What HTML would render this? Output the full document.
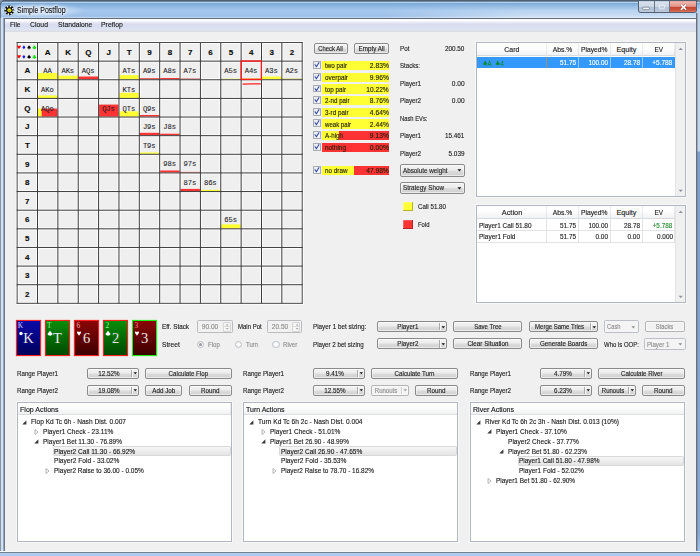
<!DOCTYPE html>
<html><head><meta charset="utf-8"><title>Simple Postflop</title>
<style>
html,body{margin:0;padding:0}
body{width:700px;height:556px;overflow:hidden;position:relative;background:#f0f0f0;font-family:"Liberation Sans",sans-serif;font-size:7px}
body>div,body>svg,body>span,#capbtns>div{position:absolute;box-sizing:border-box}
.t{position:absolute;white-space:nowrap;margin:0;padding:0;-webkit-text-stroke:0.13px currentColor}
svg{display:block;overflow:visible}
#title{left:0;top:0;width:700px;height:19px;background:linear-gradient(#4a5c6e 0px,#55667a 1.3px,#b6d6f6 2px,#b2d2f2 2.6px,#7aa6d4 3.1px,#84b0dc 4.5px,#a5c8ee 10.5px,#9dc0e8 16.4px,#bad4f0 17.1px,#c0d8f2 17.7px,#606c7a 18.1px,#606c7a 19px)}
#tglass{left:380px;top:2.6px;width:320px;height:15.2px;background:linear-gradient(rgba(255,255,255,0) 0,rgba(255,255,255,.15) 40%,rgba(255,255,255,.55) 100%);-webkit-mask-image:linear-gradient(90deg,transparent 0,#000 45%);mask-image:linear-gradient(90deg,transparent 0,#000 45%)}
#tglow{left:-14px;top:2.6px;width:100px;height:15.2px;background:radial-gradient(closest-side,rgba(255,255,255,.5) 0,rgba(255,255,255,.4) 50%,rgba(255,255,255,0) 100%)}
#tl{left:0;top:1.5px;width:1px;height:17px;background:#68727e}
#menubar{left:5px;top:19px;width:691px;height:13px;background:linear-gradient(#fafafa 0px,#ffffff 1px,#f8f9fc 2px,#eceef8 3px,#dde1f1 4.5px,#d8ddef 5.5px,#dadff0 8px,#dfe4f3 10.5px,#dcdfec 11.5px,#d6d8e0 12.3px,#eeeeee 13px)}
#lframe{left:0;top:18.4px;width:5.2px;height:535px;background:linear-gradient(90deg,#868e96 0px,#8c96a0 .6px,#c4daf2 1.1px,#daeafc 2.2px,#c0d6ee 3.0px,#8a9cb4 3.6px,#6a7686 4.1px,#6e7a8a 4.7px,#f8f8f8 5.1px)}
#rframe{left:695.6px;top:13px;width:4.4px;height:541px;background:linear-gradient(90deg,rgba(104,112,128,.0) 0,rgba(104,112,128,1) .5px,rgba(104,112,128,1) 1.2px,rgba(104,112,128,0) 1.7px),linear-gradient(#bcd0e8 0px,#c0d4ea 138px,#7f9fc8 139px,#86a6cf 380px,#88a8d0 520px,#9fbfe6 536px)}
#bframe{left:0;top:551.4px;width:700px;height:4.6px;background:linear-gradient(#fcfcfc 0,#f6f6f6 .6px,#8a94a2 1.0px,#747e8c 1.5px,#7c8896 2.0px,#aecef2 2.4px,#a8c8ee 4.6px)}
#capbtns{left:637.5px;top:1px;width:59px;height:11.6px;border-radius:0 0 3px 3px;overflow:hidden;border:0.8px solid #56606e;border-top:none;background:#9db8d6}
.cb{top:0;height:12px;border-right:0.8px solid #6c7684;background:linear-gradient(#b4c4d8 0,#d6e0ee 10%,#ccd8e8 45%,#b0c1d6 52%,#bccadc 100%)}
.cx{border-right:none;background:linear-gradient(#d8a098 0,#f2b4ac 10%,#e09488 45%,#c84832 52%,#cc543e 75%,#e08876 100%)}
</style></head>
<body>
<div id="title"></div><div id="tglow"></div><div id="tglass"></div><div id="tl"></div><div id="menubar"></div><div id="lframe"></div><div id="rframe"></div><div id="bframe"></div>
<svg style="left:0;top:0" width="700" height="5"><path d="M0 0 H3.4 Q0.6 0.9 0 4 Z" fill="#8096ae"/><path d="M0.4 4.2 Q0.9 1.6 3.6 1.1" stroke="#4a5866" stroke-width=".8" fill="none"/><path d="M700 0 H697.2 Q699.4 0.9 700 3.6 Z" fill="#7c8894"/></svg>
<svg style="left:4px;top:4.5px" width="11" height="11" viewBox="0 0 11 11">
<circle cx="5.3" cy="5.3" r="4.9" fill="#0a0a0a"/>
<circle cx="5.3" cy="5.3" r="3.95" fill="none" stroke="#ffffff" stroke-width="1.7" stroke-dasharray="1.45 1.652" stroke-dashoffset="-.1"/>
<circle cx="5.3" cy="5.3" r="2.9" fill="#0a0a0a"/>
<circle cx="5.4" cy="5.2" r="2.05" fill="#e4de1c"/>
<path d="M4.5 5.5 q.9 .9 1.8 0" stroke="#3a3600" stroke-width=".45" fill="none"/>
</svg>
<div id="capbtns"><div class="cb" style="left:0;width:16px"></div><div class="cb" style="left:16px;width:15.5px"></div><div class="cb cx" style="left:31.5px;width:27.5px"></div></div>
<svg style="left:637px;top:1px" width="60" height="12">
<rect x="5.7" y="6.2" width="6.7" height="2.2" rx=".8" fill="#fff" stroke="#59606c" stroke-width=".6"/>
<rect x="22.3" y="4.2" width="5.4" height="3.6" rx=".7" fill="#c4d0e0" stroke="#f2f5fa" stroke-width=".9" opacity=".85"/>
<path d="M44.4 4.1 l4.2 4.2 m0 -4.2 l-4.2 4.2" stroke="#54302c" stroke-width="2.7" stroke-linecap="round" opacity=".5"/>
<path d="M44.4 4.1 l4.2 4.2 m0 -4.2 l-4.2 4.2" stroke="#fff" stroke-width="1.55" stroke-linecap="square"/>
</svg>
<svg style="left:0;top:0" width="700" height="556" viewBox="0 0 700 556">
<rect x="17.15" y="42.5" width="285.05" height="260.85" fill="#efefef"/>
<rect x="15.65" y="41.00" width="3" height="263.85" fill="#fcfcfc"/>
<rect x="36.01" y="41.00" width="3" height="263.85" fill="#fcfcfc"/>
<rect x="56.37" y="41.00" width="3" height="263.85" fill="#fcfcfc"/>
<rect x="76.73" y="41.00" width="3" height="263.85" fill="#fcfcfc"/>
<rect x="97.09" y="41.00" width="3" height="263.85" fill="#fcfcfc"/>
<rect x="117.45" y="41.00" width="3" height="263.85" fill="#fcfcfc"/>
<rect x="137.81" y="41.00" width="3" height="263.85" fill="#fcfcfc"/>
<rect x="158.18" y="41.00" width="3" height="263.85" fill="#fcfcfc"/>
<rect x="178.54" y="41.00" width="3" height="263.85" fill="#fcfcfc"/>
<rect x="198.90" y="41.00" width="3" height="263.85" fill="#fcfcfc"/>
<rect x="219.26" y="41.00" width="3" height="263.85" fill="#fcfcfc"/>
<rect x="239.62" y="41.00" width="3" height="263.85" fill="#fcfcfc"/>
<rect x="259.98" y="41.00" width="3" height="263.85" fill="#fcfcfc"/>
<rect x="280.34" y="41.00" width="3" height="263.85" fill="#fcfcfc"/>
<rect x="300.70" y="41.00" width="3" height="263.85" fill="#fcfcfc"/>
<rect x="15.65" y="41.00" width="288.05" height="3" fill="#fcfcfc"/>
<rect x="15.65" y="59.63" width="288.05" height="3" fill="#fcfcfc"/>
<rect x="15.65" y="78.26" width="288.05" height="3" fill="#fcfcfc"/>
<rect x="15.65" y="96.90" width="288.05" height="3" fill="#fcfcfc"/>
<rect x="15.65" y="115.53" width="288.05" height="3" fill="#fcfcfc"/>
<rect x="15.65" y="134.16" width="288.05" height="3" fill="#fcfcfc"/>
<rect x="15.65" y="152.79" width="288.05" height="3" fill="#fcfcfc"/>
<rect x="15.65" y="171.43" width="288.05" height="3" fill="#fcfcfc"/>
<rect x="15.65" y="190.06" width="288.05" height="3" fill="#fcfcfc"/>
<rect x="15.65" y="208.69" width="288.05" height="3" fill="#fcfcfc"/>
<rect x="15.65" y="227.32" width="288.05" height="3" fill="#fcfcfc"/>
<rect x="15.65" y="245.95" width="288.05" height="3" fill="#fcfcfc"/>
<rect x="15.65" y="264.59" width="288.05" height="3" fill="#fcfcfc"/>
<rect x="15.65" y="283.22" width="288.05" height="3" fill="#fcfcfc"/>
<rect x="15.65" y="301.85" width="288.05" height="3" fill="#fcfcfc"/>
<rect x="38.01" y="73.01" width="19.36" height="6.30" fill="#ffff33"/>
<rect x="58.37" y="75.71" width="19.36" height="3.60" fill="#ffff33"/>
<rect x="78.73" y="76.51" width="19.36" height="2.80" fill="#ff3333"/>
<rect x="119.45" y="75.11" width="19.36" height="4.20" fill="#ffff33"/>
<rect x="139.81" y="78.31" width="19.36" height="1.00" fill="#ee1c1c"/>
<rect x="160.18" y="78.01" width="19.36" height="1.30" fill="#ff3333"/>
<rect x="180.54" y="78.61" width="19.36" height="0.70" fill="#c02020"/>
<rect x="221.26" y="78.71" width="19.36" height="0.60" fill="#d8d83a"/>
<rect x="241.62" y="78.51" width="19.36" height="0.80" fill="#e6e630"/>
<rect x="261.98" y="76.51" width="19.36" height="2.80" fill="#ffff33"/>
<rect x="282.34" y="78.61" width="19.36" height="0.70" fill="#b8b830"/>
<rect x="38.01" y="95.45" width="19.36" height="2.50" fill="#ffff33"/>
<rect x="119.45" y="92.85" width="19.36" height="5.10" fill="#ffff33"/>
<rect x="38.01" y="108.58" width="3.87" height="8.00" fill="#ffff33"/>
<rect x="41.69" y="108.58" width="15.68" height="8.00" fill="#ff3333"/>
<rect x="99.09" y="104.58" width="19.36" height="12.00" fill="#ff3333"/>
<rect x="119.45" y="111.38" width="19.36" height="5.20" fill="#ffff33"/>
<rect x="139.81" y="114.98" width="19.36" height="1.60" fill="#ff3333"/>
<rect x="139.81" y="132.81" width="19.36" height="2.40" fill="#ff3333"/>
<rect x="160.18" y="133.71" width="19.36" height="1.50" fill="#ff3333"/>
<rect x="139.81" y="152.44" width="19.36" height="1.40" fill="#ffff33"/>
<rect x="160.18" y="170.48" width="19.36" height="2.00" fill="#ff3333"/>
<rect x="180.54" y="171.88" width="19.36" height="0.60" fill="#d83030"/>
<rect x="180.54" y="188.91" width="19.36" height="2.20" fill="#ff3333"/>
<rect x="200.90" y="189.81" width="19.36" height="1.30" fill="#ffff33"/>
<rect x="221.26" y="224.37" width="19.36" height="4.00" fill="#ffff33"/>
<rect x="16.65" y="42.00" width="1.0" height="261.85" fill="#4a4a4a"/>
<rect x="37.01" y="42.00" width="1.0" height="261.85" fill="#3a3a3a"/>
<rect x="57.37" y="42.00" width="1.0" height="261.85" fill="#3a3a3a"/>
<rect x="77.73" y="42.00" width="1.0" height="261.85" fill="#3a3a3a"/>
<rect x="98.09" y="42.00" width="1.0" height="261.85" fill="#3a3a3a"/>
<rect x="118.45" y="42.00" width="1.0" height="261.85" fill="#3a3a3a"/>
<rect x="138.81" y="42.00" width="1.0" height="261.85" fill="#3a3a3a"/>
<rect x="159.18" y="42.00" width="1.0" height="261.85" fill="#3a3a3a"/>
<rect x="179.54" y="42.00" width="1.0" height="261.85" fill="#3a3a3a"/>
<rect x="199.90" y="42.00" width="1.0" height="261.85" fill="#3a3a3a"/>
<rect x="220.26" y="42.00" width="1.0" height="261.85" fill="#3a3a3a"/>
<rect x="240.62" y="42.00" width="1.0" height="261.85" fill="#3a3a3a"/>
<rect x="260.98" y="42.00" width="1.0" height="261.85" fill="#3a3a3a"/>
<rect x="281.34" y="42.00" width="1.0" height="261.85" fill="#3a3a3a"/>
<rect x="301.65" y="42.00" width="1.1" height="261.85" fill="#555555"/>
<rect x="16.65" y="42.00" width="286.05" height="1.0" fill="#4a4a4a"/>
<rect x="16.65" y="60.63" width="286.05" height="1.0" fill="#3a3a3a"/>
<rect x="16.65" y="79.26" width="286.05" height="1.0" fill="#3a3a3a"/>
<rect x="16.65" y="97.90" width="286.05" height="1.0" fill="#3a3a3a"/>
<rect x="16.65" y="116.53" width="286.05" height="1.0" fill="#3a3a3a"/>
<rect x="16.65" y="135.16" width="286.05" height="1.0" fill="#3a3a3a"/>
<rect x="16.65" y="153.79" width="286.05" height="1.0" fill="#3a3a3a"/>
<rect x="16.65" y="172.43" width="286.05" height="1.0" fill="#3a3a3a"/>
<rect x="16.65" y="191.06" width="286.05" height="1.0" fill="#3a3a3a"/>
<rect x="16.65" y="209.69" width="286.05" height="1.0" fill="#3a3a3a"/>
<rect x="16.65" y="228.32" width="286.05" height="1.0" fill="#3a3a3a"/>
<rect x="16.65" y="246.95" width="286.05" height="1.0" fill="#3a3a3a"/>
<rect x="16.65" y="265.59" width="286.05" height="1.0" fill="#3a3a3a"/>
<rect x="16.65" y="284.22" width="286.05" height="1.0" fill="#3a3a3a"/>
<rect x="16.65" y="302.80" width="286.05" height="1.1" fill="#555555"/>
<rect x="241.22" y="61.03" width="20.16" height="18.33" fill="none" stroke="#ff1c1c" stroke-width="1.4"/>
<path d="M242.6 84.1 C248 83.8 255 84.0 260.8 83.8" stroke="#ff2020" stroke-width="1.3" fill="none"/>
<path d="M613.2 78.0 C630 78.3 650 78.2 661.5 77.9 C665 77.6 668 76.6 670.6 75.5" stroke="#f01c24" stroke-width="1.1" fill="none"/>
<path transform="translate(19.00 47.30) scale(.88)" fill="#ff0000" d="M0 2 L-2 -0.6 C-2.3 -2.2 -0.4 -2.4 0 -1.1 C0.4 -2.4 2.3 -2.2 2 -0.6 Z"/>
<path transform="translate(23.90 47.30) scale(.88)" fill="#1010ff" d="M0 -2.1 L1.7 0 L0 2.1 L-1.7 0 Z"/>
<path transform="translate(29.10 47.30) scale(.88)" fill="#000" d="M0 -2.2 C0.6 -1 2 -0.3 1.9 0.7 C1.8 1.7 0.6 1.7 0.25 1 L0.7 2.1 H-0.7 L-0.25 1 C-0.6 1.7 -1.8 1.7 -1.9 0.7 C-2 -0.3 -0.6 -1 0 -2.2 Z"/>
<g transform="translate(34.40 47.30) scale(.9)" fill="#10e010"><circle cx="0" cy="-1.05" r="1.05"/><circle cx="-1.05" cy="0.45" r="1.05"/><circle cx="1.05" cy="0.45" r="1.05"/><path d="M-0.3 0 L-0.7 2.1 H0.7 L0.3 0 Z"/></g>
<path transform="translate(19.00 56.80) scale(.88)" fill="#ff0000" d="M0 2 L-2 -0.6 C-2.3 -2.2 -0.4 -2.4 0 -1.1 C0.4 -2.4 2.3 -2.2 2 -0.6 Z"/>
<path transform="translate(23.90 56.80) scale(.88)" fill="#1010ff" d="M0 -2.1 L1.7 0 L0 2.1 L-1.7 0 Z"/>
<path transform="translate(29.10 56.80) scale(.88)" fill="#000" d="M0 -2.2 C0.6 -1 2 -0.3 1.9 0.7 C1.8 1.7 0.6 1.7 0.25 1 L0.7 2.1 H-0.7 L-0.25 1 C-0.6 1.7 -1.8 1.7 -1.9 0.7 C-2 -0.3 -0.6 -1 0 -2.2 Z"/>
<g transform="translate(34.40 56.80) scale(.9)" fill="#10e010"><circle cx="0" cy="-1.05" r="1.05"/><circle cx="-1.05" cy="0.45" r="1.05"/><circle cx="1.05" cy="0.45" r="1.05"/><path d="M-0.3 0 L-0.7 2.1 H0.7 L0.3 0 Z"/></g>
</svg>
<div style="left:313.50px;top:43.00px;width:34.50px;height:11.10px;border:1px solid #8a8a8a;border-radius:2px;background:linear-gradient(#f3f3f3 0%,#ececec 48%,#dcdcdc 52%,#d0d0d0 100%);box-shadow:inset 0 0 0 0.7px rgba(255,255,255,.7);"></div>
<div style="left:353.90px;top:43.00px;width:35.10px;height:11.10px;border:1px solid #8a8a8a;border-radius:2px;background:linear-gradient(#f3f3f3 0%,#ececec 48%,#dcdcdc 52%,#d0d0d0 100%);box-shadow:inset 0 0 0 0.7px rgba(255,255,255,.7);"></div>
<div style="left:313.20px;top:61.30px;width:7.90px;height:7.90px;border:0.9px solid #a6abb3;border-radius:.6px;background:linear-gradient(135deg,#d8dde6,#f6f7fa 60%,#fdfdfd);box-shadow:inset 0 0 0 0.8px #eef0f3;"></div>
<svg style="left:313.20px;top:61.30px" width="8" height="8"><path d="M2.1 3.8 L3.4 5.8 L5.9 1.7" stroke="#3048a4" stroke-width="1.1" fill="none" stroke-linecap="round" stroke-linejoin="round"/></svg>
<div style="left:321.90px;top:61.20px;width:67.30px;height:9.20px;background:#ffff33;"></div>
<div style="left:313.20px;top:72.93px;width:7.90px;height:7.90px;border:0.9px solid #a6abb3;border-radius:.6px;background:linear-gradient(135deg,#d8dde6,#f6f7fa 60%,#fdfdfd);box-shadow:inset 0 0 0 0.8px #eef0f3;"></div>
<svg style="left:313.20px;top:72.93px" width="8" height="8"><path d="M2.1 3.8 L3.4 5.8 L5.9 1.7" stroke="#3048a4" stroke-width="1.1" fill="none" stroke-linecap="round" stroke-linejoin="round"/></svg>
<div style="left:321.90px;top:72.83px;width:67.30px;height:9.20px;background:#ffff33;"></div>
<div style="left:313.20px;top:84.56px;width:7.90px;height:7.90px;border:0.9px solid #a6abb3;border-radius:.6px;background:linear-gradient(135deg,#d8dde6,#f6f7fa 60%,#fdfdfd);box-shadow:inset 0 0 0 0.8px #eef0f3;"></div>
<svg style="left:313.20px;top:84.56px" width="8" height="8"><path d="M2.1 3.8 L3.4 5.8 L5.9 1.7" stroke="#3048a4" stroke-width="1.1" fill="none" stroke-linecap="round" stroke-linejoin="round"/></svg>
<div style="left:321.90px;top:84.46px;width:67.30px;height:9.20px;background:#ffff33;"></div>
<div style="left:313.20px;top:96.19px;width:7.90px;height:7.90px;border:0.9px solid #a6abb3;border-radius:.6px;background:linear-gradient(135deg,#d8dde6,#f6f7fa 60%,#fdfdfd);box-shadow:inset 0 0 0 0.8px #eef0f3;"></div>
<svg style="left:313.20px;top:96.19px" width="8" height="8"><path d="M2.1 3.8 L3.4 5.8 L5.9 1.7" stroke="#3048a4" stroke-width="1.1" fill="none" stroke-linecap="round" stroke-linejoin="round"/></svg>
<div style="left:321.90px;top:96.09px;width:67.30px;height:9.20px;background:#ffff33;"></div>
<div style="left:313.20px;top:107.82px;width:7.90px;height:7.90px;border:0.9px solid #a6abb3;border-radius:.6px;background:linear-gradient(135deg,#d8dde6,#f6f7fa 60%,#fdfdfd);box-shadow:inset 0 0 0 0.8px #eef0f3;"></div>
<svg style="left:313.20px;top:107.82px" width="8" height="8"><path d="M2.1 3.8 L3.4 5.8 L5.9 1.7" stroke="#3048a4" stroke-width="1.1" fill="none" stroke-linecap="round" stroke-linejoin="round"/></svg>
<div style="left:321.90px;top:107.72px;width:67.30px;height:9.20px;background:#ffff33;"></div>
<div style="left:313.20px;top:119.45px;width:7.90px;height:7.90px;border:0.9px solid #a6abb3;border-radius:.6px;background:linear-gradient(135deg,#d8dde6,#f6f7fa 60%,#fdfdfd);box-shadow:inset 0 0 0 0.8px #eef0f3;"></div>
<svg style="left:313.20px;top:119.45px" width="8" height="8"><path d="M2.1 3.8 L3.4 5.8 L5.9 1.7" stroke="#3048a4" stroke-width="1.1" fill="none" stroke-linecap="round" stroke-linejoin="round"/></svg>
<div style="left:321.90px;top:119.35px;width:67.30px;height:9.20px;background:#ffff33;"></div>
<div style="left:313.20px;top:131.08px;width:7.90px;height:7.90px;border:0.9px solid #a6abb3;border-radius:.6px;background:linear-gradient(135deg,#d8dde6,#f6f7fa 60%,#fdfdfd);box-shadow:inset 0 0 0 0.8px #eef0f3;"></div>
<svg style="left:313.20px;top:131.08px" width="8" height="8"><path d="M2.1 3.8 L3.4 5.8 L5.9 1.7" stroke="#3048a4" stroke-width="1.1" fill="none" stroke-linecap="round" stroke-linejoin="round"/></svg>
<div style="left:321.90px;top:130.98px;width:17.16px;height:9.20px;background:#ffff33;"></div>
<div style="left:339.06px;top:130.98px;width:50.14px;height:9.20px;background:#ff3333;"></div>
<div style="left:313.20px;top:142.71px;width:7.90px;height:7.90px;border:0.9px solid #a6abb3;border-radius:.6px;background:linear-gradient(135deg,#d8dde6,#f6f7fa 60%,#fdfdfd);box-shadow:inset 0 0 0 0.8px #eef0f3;"></div>
<svg style="left:313.20px;top:142.71px" width="8" height="8"><path d="M2.1 3.8 L3.4 5.8 L5.9 1.7" stroke="#3048a4" stroke-width="1.1" fill="none" stroke-linecap="round" stroke-linejoin="round"/></svg>
<div style="left:321.90px;top:142.61px;width:67.30px;height:9.20px;background:#ff3333;"></div>
<div style="left:313.20px;top:166.00px;width:7.90px;height:7.90px;border:0.9px solid #a6abb3;border-radius:.6px;background:linear-gradient(135deg,#d8dde6,#f6f7fa 60%,#fdfdfd);box-shadow:inset 0 0 0 0.8px #eef0f3;"></div>
<svg style="left:313.20px;top:166.00px" width="8" height="8"><path d="M2.1 3.8 L3.4 5.8 L5.9 1.7" stroke="#3048a4" stroke-width="1.1" fill="none" stroke-linecap="round" stroke-linejoin="round"/></svg>
<div style="left:321.90px;top:165.90px;width:32.17px;height:9.20px;background:#ffff33;"></div>
<div style="left:354.07px;top:165.90px;width:35.13px;height:9.20px;background:#ff3333;"></div>
<div style="left:399.90px;top:164.20px;width:65.10px;height:12.40px;border:1px solid #8a8a8a;border-radius:2px;background:linear-gradient(#f3f3f3 0%,#ececec 48%,#dcdcdc 52%,#d0d0d0 100%);box-shadow:inset 0 0 0 0.7px rgba(255,255,255,.7);"></div>
<svg style="left:456.50px;top:169.45px" width="4.80" height="3.10"><path d="M0.5 0.3 h3.80 l-1.90 2.20 z" fill="#111"/></svg>
<div style="left:399.90px;top:181.70px;width:65.10px;height:12.40px;border:1px solid #8a8a8a;border-radius:2px;background:linear-gradient(#f3f3f3 0%,#ececec 48%,#dcdcdc 52%,#d0d0d0 100%);box-shadow:inset 0 0 0 0.7px rgba(255,255,255,.7);"></div>
<svg style="left:456.50px;top:186.95px" width="4.80" height="3.10"><path d="M0.5 0.3 h3.80 l-1.90 2.20 z" fill="#111"/></svg>
<div style="left:403.20px;top:202.40px;width:9.50px;height:9.10px;background:#ffff33;box-shadow:inset -1px -1px 0 #b4b428,inset 0.6px 0.6px 0 #ffffa0;"></div>
<div style="left:403.20px;top:220.00px;width:9.50px;height:9.10px;background:#ff3333;box-shadow:inset -1px -1px 0 #b02828,inset 0.6px 0.6px 0 #ff8a8a;"></div>
<div style="left:476.00px;top:42.20px;width:209.80px;height:154.40px;background:#fff;border:1px solid #b2b6c0;box-shadow:0 0 0 0.6px rgba(255,255,255,.9);"></div>
<div style="left:477.00px;top:43.10px;width:197.50px;height:12.60px;background:linear-gradient(#ffffff 0%,#fdfdfd 45%,#f1f2f4 100%);border-bottom:0.8px solid #d8dade;"></div>
<div style="left:546.00px;top:43.10px;width:0.80px;height:12.60px;background:linear-gradient(#f2f3f5,#dcdee2);"></div>
<div style="left:578.00px;top:43.10px;width:0.80px;height:12.60px;background:linear-gradient(#f2f3f5,#dcdee2);"></div>
<div style="left:610.00px;top:43.10px;width:0.80px;height:12.60px;background:linear-gradient(#f2f3f5,#dcdee2);"></div>
<div style="left:642.00px;top:43.10px;width:0.80px;height:12.60px;background:linear-gradient(#f2f3f5,#dcdee2);"></div>
<div style="left:674.10px;top:43.10px;width:0.80px;height:12.60px;background:linear-gradient(#f2f3f5,#dcdee2);"></div>
<div style="left:674.90px;top:43.10px;width:10.00px;height:152.60px;background:#f0f0f0;border-left:0.6px solid #e4e4e4;"></div>
<svg style="left:677.5px;top:46.80px" width="6" height="4"><path d="M0.6 3 L2.7 0.7 L4.8 3 Z" fill="#8a8f98"/></svg>
<svg style="left:677.5px;top:189.00px" width="6" height="4"><path d="M0.6 0.7 L2.7 3 L4.8 0.7 Z" fill="#8a8f98"/></svg>
<div style="left:477.00px;top:57.00px;width:197.50px;height:11.15px;background:#3399ff;"></div>
<div style="left:545.90px;top:57.00px;width:1.00px;height:11.15px;background:#a08f80;"></div>
<div style="left:577.90px;top:57.00px;width:1.00px;height:11.15px;background:#8fc6fb;"></div>
<div style="left:609.90px;top:57.00px;width:1.00px;height:11.15px;background:#8fc6fb;"></div>
<div style="left:641.90px;top:57.00px;width:1.00px;height:11.15px;background:#8fc6fb;"></div>
<div style="left:476.00px;top:205.40px;width:209.80px;height:97.50px;background:#fff;border:1px solid #b2b6c0;box-shadow:0 0 0 0.6px rgba(255,255,255,.9);"></div>
<div style="left:477.00px;top:206.30px;width:197.50px;height:12.60px;background:linear-gradient(#ffffff 0%,#fdfdfd 45%,#f1f2f4 100%);border-bottom:0.8px solid #d8dade;"></div>
<div style="left:546.00px;top:206.30px;width:0.80px;height:12.60px;background:linear-gradient(#f2f3f5,#dcdee2);"></div>
<div style="left:578.00px;top:206.30px;width:0.80px;height:12.60px;background:linear-gradient(#f2f3f5,#dcdee2);"></div>
<div style="left:610.00px;top:206.30px;width:0.80px;height:12.60px;background:linear-gradient(#f2f3f5,#dcdee2);"></div>
<div style="left:642.00px;top:206.30px;width:0.80px;height:12.60px;background:linear-gradient(#f2f3f5,#dcdee2);"></div>
<div style="left:674.10px;top:206.30px;width:0.80px;height:12.60px;background:linear-gradient(#f2f3f5,#dcdee2);"></div>
<div style="left:674.90px;top:206.30px;width:10.00px;height:95.70px;background:#f0f0f0;border-left:0.6px solid #e4e4e4;"></div>
<svg style="left:677.5px;top:210.00px" width="6" height="4"><path d="M0.6 3 L2.7 0.7 L4.8 3 Z" fill="#8a8f98"/></svg>
<svg style="left:677.5px;top:295.30px" width="6" height="4"><path d="M0.6 0.7 L2.7 3 L4.8 0.7 Z" fill="#8a8f98"/></svg>
<div style="left:477.00px;top:230.35px;width:197.50px;height:0.80px;background:#e3e3e3;"></div>
<div style="left:546.00px;top:219.00px;width:0.80px;height:11.75px;background:#e3e3e3;"></div>
<div style="left:578.00px;top:219.00px;width:0.80px;height:11.75px;background:#e3e3e3;"></div>
<div style="left:610.00px;top:219.00px;width:0.80px;height:11.75px;background:#e3e3e3;"></div>
<div style="left:642.00px;top:219.00px;width:0.80px;height:11.75px;background:#e3e3e3;"></div>
<div style="left:674.10px;top:219.00px;width:0.80px;height:11.75px;background:#e3e3e3;"></div>
<div style="left:477.00px;top:242.10px;width:197.50px;height:0.80px;background:#e3e3e3;"></div>
<div style="left:546.00px;top:230.75px;width:0.80px;height:11.75px;background:#e3e3e3;"></div>
<div style="left:578.00px;top:230.75px;width:0.80px;height:11.75px;background:#e3e3e3;"></div>
<div style="left:610.00px;top:230.75px;width:0.80px;height:11.75px;background:#e3e3e3;"></div>
<div style="left:642.00px;top:230.75px;width:0.80px;height:11.75px;background:#e3e3e3;"></div>
<div style="left:674.10px;top:230.75px;width:0.80px;height:11.75px;background:#e3e3e3;"></div>
<div style="left:16.40px;top:320.20px;width:24.60px;height:35.50px;background:linear-gradient(#0a0aa8,#00005c);border:1.1px solid #ff2020;box-shadow:0 0 0.8px #ff2020;"></div>
<svg style="left:17.20px;top:330.0px" width="8" height="7" viewBox="-4 -3.5 8 7"><circle cx="0" cy="0" r="1.7" fill="#fff"/></svg>
<div style="left:45.40px;top:320.20px;width:24.60px;height:35.50px;background:linear-gradient(#0a8c0a,#004a00);border:1.1px solid #ff2020;box-shadow:0 0 0.8px #ff2020;"></div>
<svg style="left:46.20px;top:330.0px" width="8" height="7" viewBox="-4 -3.5 8 7"><g fill="#fff"><circle cx="0" cy="-1" r="1.25"/><circle cx="-1.1" cy="0.5" r="1.25"/><circle cx="1.1" cy="0.5" r="1.25"/><path d="M-0.4 0 L-0.8 2.2 H0.8 L0.4 0Z"/></g></svg>
<div style="left:74.40px;top:320.20px;width:24.60px;height:35.50px;background:linear-gradient(#8a0505,#3c0000);border:1.1px solid #ff2020;box-shadow:0 0 0.8px #ff2020;"></div>
<svg style="left:75.20px;top:330.0px" width="8" height="7" viewBox="-4 -3.5 8 7"><path fill="#fff" d="M0 2.2 L-2.1 -0.7 C-2.3 -2.3 -0.4 -2.4 0 -1.2 C0.4 -2.4 2.3 -2.3 2.1 -0.7 Z"/></svg>
<div style="left:103.40px;top:320.20px;width:24.60px;height:35.50px;background:linear-gradient(#0a8c0a,#004a00);border:1.1px solid #ff2020;box-shadow:0 0 0.8px #ff2020;"></div>
<svg style="left:104.20px;top:330.0px" width="8" height="7" viewBox="-4 -3.5 8 7"><g fill="#fff"><circle cx="0" cy="-1" r="1.25"/><circle cx="-1.1" cy="0.5" r="1.25"/><circle cx="1.1" cy="0.5" r="1.25"/><path d="M-0.4 0 L-0.8 2.2 H0.8 L0.4 0Z"/></g></svg>
<div style="left:132.40px;top:320.20px;width:24.60px;height:35.50px;background:linear-gradient(#8a0505,#3c0000);border:1.1px solid #18f018;box-shadow:0 0 0.8px #18f018;"></div>
<svg style="left:133.20px;top:330.0px" width="8" height="7" viewBox="-4 -3.5 8 7"><path fill="#fff" d="M0 2.2 L-2.1 -0.7 C-2.3 -2.3 -0.4 -2.4 0 -1.2 C0.4 -2.4 2.3 -2.3 2.1 -0.7 Z"/></svg>
<div style="left:196.50px;top:320.30px;width:36.00px;height:12.80px;border:1px solid #b9bbbe;border-radius:1.5px;background:#f1f1f1;"></div>
<div style="left:222.60px;top:321.60px;width:8.40px;height:10.20px;border:0.6px solid #d6d6d6;border-radius:1px;background:#f5f5f5;"></div>
<div style="left:222.60px;top:326.40px;width:8.40px;height:0.60px;background:#dadada;"></div>
<svg style="left:225.10px;top:322.70px" width="5" height="8"><path d="M0.8 2.5 L2.2 0.8 L3.6 2.5 Z M0.8 5.1 L2.2 6.8 L3.6 5.1 Z" fill="#a8a8a8"/></svg>
<div style="left:266.50px;top:320.30px;width:35.50px;height:12.80px;border:1px solid #b9bbbe;border-radius:1.5px;background:#f1f1f1;"></div>
<div style="left:292.10px;top:321.60px;width:8.40px;height:10.20px;border:0.6px solid #d6d6d6;border-radius:1px;background:#f5f5f5;"></div>
<div style="left:292.10px;top:326.40px;width:8.40px;height:0.60px;background:#dadada;"></div>
<svg style="left:294.60px;top:322.70px" width="5" height="8"><path d="M0.8 2.5 L2.2 0.8 L3.6 2.5 Z M0.8 5.1 L2.2 6.8 L3.6 5.1 Z" fill="#a8a8a8"/></svg>
<div style="left:196.80px;top:340.50px;width:7.20px;height:7.20px;border:0.9px solid #bcc0c6;border-radius:50%;background:radial-gradient(#fdfdfd 30%,#e6e6e6);"></div>
<div style="left:198.90px;top:342.60px;width:3.00px;height:3.00px;border-radius:50%;background:#9a9ca2;"></div>
<div style="left:234.60px;top:340.50px;width:7.20px;height:7.20px;border:0.9px solid #bcc0c6;border-radius:50%;background:radial-gradient(#fdfdfd 30%,#e6e6e6);"></div>
<div style="left:272.40px;top:340.50px;width:7.20px;height:7.20px;border:0.9px solid #bcc0c6;border-radius:50%;background:radial-gradient(#fdfdfd 30%,#e6e6e6);"></div>
<div style="left:377.40px;top:321.00px;width:69.60px;height:11.20px;border:1px solid #8a8a8a;border-radius:2px;background:linear-gradient(#f3f3f3 0%,#ececec 48%,#dcdcdc 52%,#d0d0d0 100%);box-shadow:inset 0 0 0 0.7px rgba(255,255,255,.7);"></div>
<div style="left:439.00px;top:322.70px;width:0.80px;height:7.80px;background:#aaaaaa;"></div>
<div style="left:439.80px;top:322.70px;width:0.70px;height:7.80px;background:#fafafa;"></div>
<svg style="left:440.80px;top:325.62px" width="4.50" height="2.95"><path d="M0.5 0.3 h3.50 l-1.75 2.05 z" fill="#111"/></svg>
<div style="left:377.40px;top:338.30px;width:69.60px;height:11.20px;border:1px solid #8a8a8a;border-radius:2px;background:linear-gradient(#f3f3f3 0%,#ececec 48%,#dcdcdc 52%,#d0d0d0 100%);box-shadow:inset 0 0 0 0.7px rgba(255,255,255,.7);"></div>
<div style="left:439.00px;top:340.00px;width:0.80px;height:7.80px;background:#aaaaaa;"></div>
<div style="left:439.80px;top:340.00px;width:0.70px;height:7.80px;background:#fafafa;"></div>
<svg style="left:440.80px;top:342.93px" width="4.50" height="2.95"><path d="M0.5 0.3 h3.50 l-1.75 2.05 z" fill="#111"/></svg>
<div style="left:452.80px;top:321.00px;width:69.70px;height:11.20px;border:1px solid #8a8a8a;border-radius:2px;background:linear-gradient(#f3f3f3 0%,#ececec 48%,#dcdcdc 52%,#d0d0d0 100%);box-shadow:inset 0 0 0 0.7px rgba(255,255,255,.7);"></div>
<div style="left:452.80px;top:338.30px;width:69.70px;height:11.20px;border:1px solid #8a8a8a;border-radius:2px;background:linear-gradient(#f3f3f3 0%,#ececec 48%,#dcdcdc 52%,#d0d0d0 100%);box-shadow:inset 0 0 0 0.7px rgba(255,255,255,.7);"></div>
<div style="left:528.60px;top:321.00px;width:69.60px;height:11.20px;border:1px solid #8a8a8a;border-radius:2px;background:linear-gradient(#f3f3f3 0%,#ececec 48%,#dcdcdc 52%,#d0d0d0 100%);box-shadow:inset 0 0 0 0.7px rgba(255,255,255,.7);"></div>
<div style="left:590.20px;top:322.70px;width:0.80px;height:7.80px;background:#aaaaaa;"></div>
<div style="left:591.00px;top:322.70px;width:0.70px;height:7.80px;background:#fafafa;"></div>
<svg style="left:592.00px;top:325.62px" width="4.50" height="2.95"><path d="M0.5 0.3 h3.50 l-1.75 2.05 z" fill="#111"/></svg>
<div style="left:528.60px;top:338.30px;width:69.60px;height:11.20px;border:1px solid #8a8a8a;border-radius:2px;background:linear-gradient(#f3f3f3 0%,#ececec 48%,#dcdcdc 52%,#d0d0d0 100%);box-shadow:inset 0 0 0 0.7px rgba(255,255,255,.7);"></div>
<div style="left:603.80px;top:320.30px;width:35.30px;height:12.60px;border:1px solid #bcc0c6;border-radius:1.5px;background:#f4f4f4;"></div>
<svg style="left:631.40px;top:325.70px" width="4.60" height="3.00"><path d="M0.5 0.3 h3.60 l-1.80 2.10 z" fill="#8c8c8c"/></svg>
<div style="left:644.80px;top:321.00px;width:40.30px;height:11.20px;border:1px solid #b4b4b4;border-radius:2px;background:#f2f2f2;box-shadow:inset 0 0 0 1px #fafafa;"></div>
<div style="left:644.40px;top:337.90px;width:41.30px;height:12.40px;border:1px solid #bcc0c6;border-radius:1.5px;background:#f4f4f4;"></div>
<svg style="left:678.00px;top:343.20px" width="4.60" height="3.00"><path d="M0.5 0.3 h3.60 l-1.80 2.10 z" fill="#8c8c8c"/></svg>
<div style="left:87.20px;top:367.80px;width:52.00px;height:11.10px;border:1px solid #8a8a8a;border-radius:2px;background:linear-gradient(#f3f3f3 0%,#ececec 48%,#dcdcdc 52%,#d0d0d0 100%);box-shadow:inset 0 0 0 0.7px rgba(255,255,255,.7);"></div>
<div style="left:131.20px;top:369.50px;width:0.80px;height:7.70px;background:#aaaaaa;"></div>
<div style="left:132.00px;top:369.50px;width:0.70px;height:7.70px;background:#fafafa;"></div>
<svg style="left:133.00px;top:372.38px" width="4.50" height="2.95"><path d="M0.5 0.3 h3.50 l-1.75 2.05 z" fill="#111"/></svg>
<div style="left:87.20px;top:384.90px;width:52.00px;height:11.10px;border:1px solid #8a8a8a;border-radius:2px;background:linear-gradient(#f3f3f3 0%,#ececec 48%,#dcdcdc 52%,#d0d0d0 100%);box-shadow:inset 0 0 0 0.7px rgba(255,255,255,.7);"></div>
<div style="left:131.20px;top:386.60px;width:0.80px;height:7.70px;background:#aaaaaa;"></div>
<div style="left:132.00px;top:386.60px;width:0.70px;height:7.70px;background:#fafafa;"></div>
<svg style="left:133.00px;top:389.47px" width="4.50" height="2.95"><path d="M0.5 0.3 h3.50 l-1.75 2.05 z" fill="#111"/></svg>
<div style="left:145.20px;top:367.80px;width:87.00px;height:11.10px;border:1px solid #8a8a8a;border-radius:2px;background:linear-gradient(#f3f3f3 0%,#ececec 48%,#dcdcdc 52%,#d0d0d0 100%);box-shadow:inset 0 0 0 0.7px rgba(255,255,255,.7);"></div>
<div style="left:145.20px;top:384.90px;width:37.00px;height:11.10px;border:1px solid #8a8a8a;border-radius:2px;background:linear-gradient(#f3f3f3 0%,#ececec 48%,#dcdcdc 52%,#d0d0d0 100%);box-shadow:inset 0 0 0 0.7px rgba(255,255,255,.7);"></div>
<div style="left:188.90px;top:384.90px;width:43.30px;height:11.10px;border:1px solid #8a8a8a;border-radius:2px;background:linear-gradient(#f3f3f3 0%,#ececec 48%,#dcdcdc 52%,#d0d0d0 100%);box-shadow:inset 0 0 0 0.7px rgba(255,255,255,.7);"></div>
<div style="left:17.00px;top:402.00px;width:215.20px;height:139.60px;background:#fff;border:1px solid #b2b6c0;box-shadow:0 0 0 0.6px rgba(255,255,255,.9);"></div>
<div style="left:18.00px;top:403.00px;width:213.20px;height:12.20px;background:linear-gradient(#ffffff 0%,#fdfdfd 45%,#f0f1f3 100%);border-bottom:0.8px solid #dcdee2;"></div>
<div style="left:230.40px;top:403.00px;width:0.80px;height:12.20px;background:linear-gradient(#f2f3f5,#dcdee2);"></div>
<svg style="left:22.20px;top:419.60px" width="5" height="5"><path d="M4.4 0.3 V4.4 H0.3 Z" fill="#383838"/></svg>
<svg style="left:33.70px;top:428.55px" width="5" height="6"><path d="M1.0 0.5 L4.0 3 L1.0 5.5 Z" fill="#fff" stroke="#9c9c9c" stroke-width=".75"/></svg>
<svg style="left:33.70px;top:439.30px" width="5" height="5"><path d="M4.4 0.3 V4.4 H0.3 Z" fill="#383838"/></svg>
<div style="left:52.50px;top:446.35px;width:178.50px;height:9.60px;background:linear-gradient(#f6f6f6,#e4e4e4);border:0.7px solid #d9d9d9;border-radius:1.2px;"></div>
<svg style="left:45.20px;top:467.95px" width="5" height="6"><path d="M1.0 0.5 L4.0 3 L1.0 5.5 Z" fill="#fff" stroke="#9c9c9c" stroke-width=".75"/></svg>
<div style="left:313.30px;top:367.80px;width:52.00px;height:11.10px;border:1px solid #8a8a8a;border-radius:2px;background:linear-gradient(#f3f3f3 0%,#ececec 48%,#dcdcdc 52%,#d0d0d0 100%);box-shadow:inset 0 0 0 0.7px rgba(255,255,255,.7);"></div>
<div style="left:357.30px;top:369.50px;width:0.80px;height:7.70px;background:#aaaaaa;"></div>
<div style="left:358.10px;top:369.50px;width:0.70px;height:7.70px;background:#fafafa;"></div>
<svg style="left:359.10px;top:372.38px" width="4.50" height="2.95"><path d="M0.5 0.3 h3.50 l-1.75 2.05 z" fill="#111"/></svg>
<div style="left:313.30px;top:384.90px;width:52.00px;height:11.10px;border:1px solid #8a8a8a;border-radius:2px;background:linear-gradient(#f3f3f3 0%,#ececec 48%,#dcdcdc 52%,#d0d0d0 100%);box-shadow:inset 0 0 0 0.7px rgba(255,255,255,.7);"></div>
<div style="left:357.30px;top:386.60px;width:0.80px;height:7.70px;background:#aaaaaa;"></div>
<div style="left:358.10px;top:386.60px;width:0.70px;height:7.70px;background:#fafafa;"></div>
<svg style="left:359.10px;top:389.47px" width="4.50" height="2.95"><path d="M0.5 0.3 h3.50 l-1.75 2.05 z" fill="#111"/></svg>
<div style="left:371.30px;top:367.80px;width:87.00px;height:11.10px;border:1px solid #8a8a8a;border-radius:2px;background:linear-gradient(#f3f3f3 0%,#ececec 48%,#dcdcdc 52%,#d0d0d0 100%);box-shadow:inset 0 0 0 0.7px rgba(255,255,255,.7);"></div>
<div style="left:371.30px;top:384.90px;width:37.40px;height:11.10px;border:1px solid #b4b4b4;border-radius:2px;background:#f2f2f2;box-shadow:inset 0 0 0 1px #fafafa;"></div>
<div style="left:401.00px;top:386.60px;width:0.80px;height:7.70px;background:#cfcfcf;"></div>
<div style="left:401.80px;top:386.60px;width:0.70px;height:7.70px;background:#fafafa;"></div>
<svg style="left:402.65px;top:389.47px" width="4.50" height="2.95"><path d="M0.5 0.3 h3.50 l-1.75 2.05 z" fill="#9a9a9a"/></svg>
<div style="left:415.00px;top:384.90px;width:43.30px;height:11.10px;border:1px solid #8a8a8a;border-radius:2px;background:linear-gradient(#f3f3f3 0%,#ececec 48%,#dcdcdc 52%,#d0d0d0 100%);box-shadow:inset 0 0 0 0.7px rgba(255,255,255,.7);"></div>
<div style="left:243.10px;top:402.00px;width:215.20px;height:139.60px;background:#fff;border:1px solid #b2b6c0;box-shadow:0 0 0 0.6px rgba(255,255,255,.9);"></div>
<div style="left:244.10px;top:403.00px;width:213.20px;height:12.20px;background:linear-gradient(#ffffff 0%,#fdfdfd 45%,#f0f1f3 100%);border-bottom:0.8px solid #dcdee2;"></div>
<div style="left:456.50px;top:403.00px;width:0.80px;height:12.20px;background:linear-gradient(#f2f3f5,#dcdee2);"></div>
<svg style="left:249.10px;top:419.60px" width="5" height="5"><path d="M4.4 0.3 V4.4 H0.3 Z" fill="#383838"/></svg>
<svg style="left:260.60px;top:428.55px" width="5" height="6"><path d="M1.0 0.5 L4.0 3 L1.0 5.5 Z" fill="#fff" stroke="#9c9c9c" stroke-width=".75"/></svg>
<svg style="left:260.60px;top:439.30px" width="5" height="5"><path d="M4.4 0.3 V4.4 H0.3 Z" fill="#383838"/></svg>
<div style="left:279.40px;top:446.35px;width:177.70px;height:9.60px;background:linear-gradient(#f6f6f6,#e4e4e4);border:0.7px solid #d9d9d9;border-radius:1.2px;"></div>
<svg style="left:272.10px;top:467.95px" width="5" height="6"><path d="M1.0 0.5 L4.0 3 L1.0 5.5 Z" fill="#fff" stroke="#9c9c9c" stroke-width=".75"/></svg>
<div style="left:540.40px;top:367.80px;width:52.00px;height:11.10px;border:1px solid #8a8a8a;border-radius:2px;background:linear-gradient(#f3f3f3 0%,#ececec 48%,#dcdcdc 52%,#d0d0d0 100%);box-shadow:inset 0 0 0 0.7px rgba(255,255,255,.7);"></div>
<div style="left:584.40px;top:369.50px;width:0.80px;height:7.70px;background:#aaaaaa;"></div>
<div style="left:585.20px;top:369.50px;width:0.70px;height:7.70px;background:#fafafa;"></div>
<svg style="left:586.20px;top:372.38px" width="4.50" height="2.95"><path d="M0.5 0.3 h3.50 l-1.75 2.05 z" fill="#111"/></svg>
<div style="left:540.40px;top:384.90px;width:52.00px;height:11.10px;border:1px solid #8a8a8a;border-radius:2px;background:linear-gradient(#f3f3f3 0%,#ececec 48%,#dcdcdc 52%,#d0d0d0 100%);box-shadow:inset 0 0 0 0.7px rgba(255,255,255,.7);"></div>
<div style="left:584.40px;top:386.60px;width:0.80px;height:7.70px;background:#aaaaaa;"></div>
<div style="left:585.20px;top:386.60px;width:0.70px;height:7.70px;background:#fafafa;"></div>
<svg style="left:586.20px;top:389.47px" width="4.50" height="2.95"><path d="M0.5 0.3 h3.50 l-1.75 2.05 z" fill="#111"/></svg>
<div style="left:598.40px;top:367.80px;width:87.00px;height:11.10px;border:1px solid #8a8a8a;border-radius:2px;background:linear-gradient(#f3f3f3 0%,#ececec 48%,#dcdcdc 52%,#d0d0d0 100%);box-shadow:inset 0 0 0 0.7px rgba(255,255,255,.7);"></div>
<div style="left:598.40px;top:384.90px;width:37.40px;height:11.10px;border:1px solid #8a8a8a;border-radius:2px;background:linear-gradient(#f3f3f3 0%,#ececec 48%,#dcdcdc 52%,#d0d0d0 100%);box-shadow:inset 0 0 0 0.7px rgba(255,255,255,.7);"></div>
<div style="left:628.10px;top:386.60px;width:0.80px;height:7.70px;background:#aaaaaa;"></div>
<div style="left:628.90px;top:386.60px;width:0.70px;height:7.70px;background:#fafafa;"></div>
<svg style="left:629.75px;top:389.47px" width="4.50" height="2.95"><path d="M0.5 0.3 h3.50 l-1.75 2.05 z" fill="#111"/></svg>
<div style="left:642.10px;top:384.90px;width:43.30px;height:11.10px;border:1px solid #8a8a8a;border-radius:2px;background:linear-gradient(#f3f3f3 0%,#ececec 48%,#dcdcdc 52%,#d0d0d0 100%);box-shadow:inset 0 0 0 0.7px rgba(255,255,255,.7);"></div>
<div style="left:470.20px;top:402.00px;width:215.20px;height:139.60px;background:#fff;border:1px solid #b2b6c0;box-shadow:0 0 0 0.6px rgba(255,255,255,.9);"></div>
<div style="left:471.20px;top:403.00px;width:213.20px;height:12.20px;background:linear-gradient(#ffffff 0%,#fdfdfd 45%,#f0f1f3 100%);border-bottom:0.8px solid #dcdee2;"></div>
<div style="left:683.60px;top:403.00px;width:0.80px;height:12.20px;background:linear-gradient(#f2f3f5,#dcdee2);"></div>
<svg style="left:475.90px;top:419.60px" width="5" height="5"><path d="M4.4 0.3 V4.4 H0.3 Z" fill="#383838"/></svg>
<svg style="left:487.40px;top:429.45px" width="5" height="5"><path d="M4.4 0.3 V4.4 H0.3 Z" fill="#383838"/></svg>
<svg style="left:498.90px;top:449.15px" width="5" height="5"><path d="M4.4 0.3 V4.4 H0.3 Z" fill="#383838"/></svg>
<div style="left:517.70px;top:456.20px;width:166.50px;height:9.60px;background:linear-gradient(#f6f6f6,#e4e4e4);border:0.7px solid #d9d9d9;border-radius:1.2px;"></div>
<svg style="left:487.40px;top:477.80px" width="5" height="6"><path d="M1.0 0.5 L4.0 3 L1.0 5.5 Z" fill="#fff" stroke="#9c9c9c" stroke-width=".75"/></svg>
<span class="t" id="t1" style="top:5.24px;line-height:10.92px;font-size:8.4px;color:#0c1018;left:17.00px;transform:scaleX(0.834);transform-origin:0 50%;text-shadow:0 0 3px #fff,0 0 4px #fff,0 0 5px rgba(255,255,255,.9);">Simple Postflop</span>
<span class="t" id="t2" style="top:20.49px;line-height:9.62px;font-size:7.4px;color:#1c1c1c;left:10.00px;transform:scaleX(0.881);transform-origin:0 50%;">File</span>
<span class="t" id="t3" style="top:20.49px;line-height:9.62px;font-size:7.4px;color:#1c1c1c;left:30.00px;transform:scaleX(0.932);transform-origin:0 50%;">Cloud</span>
<span class="t" id="t4" style="top:20.49px;line-height:9.62px;font-size:7.4px;color:#1c1c1c;left:57.50px;transform:scaleX(0.917);transform-origin:0 50%;">Standalone</span>
<span class="t" id="t5" style="top:20.49px;line-height:9.62px;font-size:7.4px;color:#1c1c1c;left:101.20px;transform:scaleX(0.931);transform-origin:0 50%;">Preflop</span>
<div class="t" style="top:47.52px;line-height:10.4px;font-size:8.0px;color:#0a0a0a;font-weight:bold;left:-102.31px;width:300px;text-align:center;"><span id="t6" style="display:inline-block;">A</span></div>
<div class="t" style="top:66.35px;line-height:10.4px;font-size:8.0px;color:#0a0a0a;font-weight:bold;left:-122.67px;width:300px;text-align:center;"><span id="t7" style="display:inline-block;">A</span></div>
<div class="t" style="top:47.52px;line-height:10.4px;font-size:8.0px;color:#0a0a0a;font-weight:bold;left:-81.95px;width:300px;text-align:center;"><span id="t8" style="display:inline-block;">K</span></div>
<div class="t" style="top:84.98px;line-height:10.4px;font-size:8.0px;color:#0a0a0a;font-weight:bold;left:-122.67px;width:300px;text-align:center;"><span id="t9" style="display:inline-block;">K</span></div>
<div class="t" style="top:47.52px;line-height:10.4px;font-size:8.0px;color:#0a0a0a;font-weight:bold;left:-61.59px;width:300px;text-align:center;"><span id="t10" style="display:inline-block;">Q</span></div>
<div class="t" style="top:103.61px;line-height:10.4px;font-size:8.0px;color:#0a0a0a;font-weight:bold;left:-122.67px;width:300px;text-align:center;"><span id="t11" style="display:inline-block;">Q</span></div>
<div class="t" style="top:47.52px;line-height:10.4px;font-size:8.0px;color:#0a0a0a;font-weight:bold;left:-41.23px;width:300px;text-align:center;"><span id="t12" style="display:inline-block;">J</span></div>
<div class="t" style="top:122.24px;line-height:10.4px;font-size:8.0px;color:#0a0a0a;font-weight:bold;left:-122.67px;width:300px;text-align:center;"><span id="t13" style="display:inline-block;">J</span></div>
<div class="t" style="top:47.52px;line-height:10.4px;font-size:8.0px;color:#0a0a0a;font-weight:bold;left:-20.87px;width:300px;text-align:center;"><span id="t14" style="display:inline-block;">T</span></div>
<div class="t" style="top:140.88px;line-height:10.4px;font-size:8.0px;color:#0a0a0a;font-weight:bold;left:-122.67px;width:300px;text-align:center;"><span id="t15" style="display:inline-block;">T</span></div>
<div class="t" style="top:47.52px;line-height:10.4px;font-size:8.0px;color:#0a0a0a;font-weight:bold;left:-0.51px;width:300px;text-align:center;"><span id="t16" style="display:inline-block;">9</span></div>
<div class="t" style="top:159.51px;line-height:10.4px;font-size:8.0px;color:#0a0a0a;font-weight:bold;left:-122.67px;width:300px;text-align:center;"><span id="t17" style="display:inline-block;">9</span></div>
<div class="t" style="top:47.52px;line-height:10.4px;font-size:8.0px;color:#0a0a0a;font-weight:bold;left:19.86px;width:300px;text-align:center;"><span id="t18" style="display:inline-block;">8</span></div>
<div class="t" style="top:178.14px;line-height:10.4px;font-size:8.0px;color:#0a0a0a;font-weight:bold;left:-122.67px;width:300px;text-align:center;"><span id="t19" style="display:inline-block;">8</span></div>
<div class="t" style="top:47.52px;line-height:10.4px;font-size:8.0px;color:#0a0a0a;font-weight:bold;left:40.22px;width:300px;text-align:center;"><span id="t20" style="display:inline-block;">7</span></div>
<div class="t" style="top:196.77px;line-height:10.4px;font-size:8.0px;color:#0a0a0a;font-weight:bold;left:-122.67px;width:300px;text-align:center;"><span id="t21" style="display:inline-block;">7</span></div>
<div class="t" style="top:47.52px;line-height:10.4px;font-size:8.0px;color:#0a0a0a;font-weight:bold;left:60.58px;width:300px;text-align:center;"><span id="t22" style="display:inline-block;">6</span></div>
<div class="t" style="top:215.41px;line-height:10.4px;font-size:8.0px;color:#0a0a0a;font-weight:bold;left:-122.67px;width:300px;text-align:center;"><span id="t23" style="display:inline-block;">6</span></div>
<div class="t" style="top:47.52px;line-height:10.4px;font-size:8.0px;color:#0a0a0a;font-weight:bold;left:80.94px;width:300px;text-align:center;"><span id="t24" style="display:inline-block;">5</span></div>
<div class="t" style="top:234.04px;line-height:10.4px;font-size:8.0px;color:#0a0a0a;font-weight:bold;left:-122.67px;width:300px;text-align:center;"><span id="t25" style="display:inline-block;">5</span></div>
<div class="t" style="top:47.52px;line-height:10.4px;font-size:8.0px;color:#0a0a0a;font-weight:bold;left:101.30px;width:300px;text-align:center;"><span id="t26" style="display:inline-block;">4</span></div>
<div class="t" style="top:252.67px;line-height:10.4px;font-size:8.0px;color:#0a0a0a;font-weight:bold;left:-122.67px;width:300px;text-align:center;"><span id="t27" style="display:inline-block;">4</span></div>
<div class="t" style="top:47.52px;line-height:10.4px;font-size:8.0px;color:#0a0a0a;font-weight:bold;left:121.66px;width:300px;text-align:center;"><span id="t28" style="display:inline-block;">3</span></div>
<div class="t" style="top:271.30px;line-height:10.4px;font-size:8.0px;color:#0a0a0a;font-weight:bold;left:-122.67px;width:300px;text-align:center;"><span id="t29" style="display:inline-block;">3</span></div>
<div class="t" style="top:47.52px;line-height:10.4px;font-size:8.0px;color:#0a0a0a;font-weight:bold;left:142.02px;width:300px;text-align:center;"><span id="t30" style="display:inline-block;">2</span></div>
<div class="t" style="top:289.93px;line-height:10.4px;font-size:8.0px;color:#0a0a0a;font-weight:bold;left:-122.67px;width:300px;text-align:center;"><span id="t31" style="display:inline-block;">2</span></div>
<div class="t" style="top:67.27px;line-height:9.36px;font-size:7.2px;color:#1c2026;font-family:'Liberation Mono', monospace;letter-spacing:-0.100px;left:-102.61px;width:300px;text-align:center;-webkit-text-stroke:0.08px currentColor;"><span id="t32" style="display:inline-block;">AA</span></div>
<div class="t" style="top:67.27px;line-height:9.36px;font-size:7.2px;color:#1c2026;font-family:'Liberation Mono', monospace;letter-spacing:-0.100px;left:-82.25px;width:300px;text-align:center;-webkit-text-stroke:0.08px currentColor;"><span id="t33" style="display:inline-block;">AKs</span></div>
<div class="t" style="top:67.27px;line-height:9.36px;font-size:7.2px;color:#1c2026;font-family:'Liberation Mono', monospace;letter-spacing:-0.100px;left:-61.89px;width:300px;text-align:center;-webkit-text-stroke:0.08px currentColor;"><span id="t34" style="display:inline-block;">AQs</span></div>
<div class="t" style="top:67.27px;line-height:9.36px;font-size:7.2px;color:#1c2026;font-family:'Liberation Mono', monospace;letter-spacing:-0.100px;left:-21.17px;width:300px;text-align:center;-webkit-text-stroke:0.08px currentColor;"><span id="t35" style="display:inline-block;">ATs</span></div>
<div class="t" style="top:67.27px;line-height:9.36px;font-size:7.2px;color:#1c2026;font-family:'Liberation Mono', monospace;letter-spacing:-0.100px;left:-0.81px;width:300px;text-align:center;-webkit-text-stroke:0.08px currentColor;"><span id="t36" style="display:inline-block;">A9s</span></div>
<div class="t" style="top:67.27px;line-height:9.36px;font-size:7.2px;color:#1c2026;font-family:'Liberation Mono', monospace;letter-spacing:-0.100px;left:19.56px;width:300px;text-align:center;-webkit-text-stroke:0.08px currentColor;"><span id="t37" style="display:inline-block;">A8s</span></div>
<div class="t" style="top:67.27px;line-height:9.36px;font-size:7.2px;color:#1c2026;font-family:'Liberation Mono', monospace;letter-spacing:-0.100px;left:39.92px;width:300px;text-align:center;-webkit-text-stroke:0.08px currentColor;"><span id="t38" style="display:inline-block;">A7s</span></div>
<div class="t" style="top:67.27px;line-height:9.36px;font-size:7.2px;color:#1c2026;font-family:'Liberation Mono', monospace;letter-spacing:-0.100px;left:80.64px;width:300px;text-align:center;-webkit-text-stroke:0.08px currentColor;"><span id="t39" style="display:inline-block;">A5s</span></div>
<div class="t" style="top:67.27px;line-height:9.36px;font-size:7.2px;color:#1c2026;font-family:'Liberation Mono', monospace;letter-spacing:-0.100px;left:101.00px;width:300px;text-align:center;-webkit-text-stroke:0.08px currentColor;"><span id="t40" style="display:inline-block;">A4s</span></div>
<div class="t" style="top:67.27px;line-height:9.36px;font-size:7.2px;color:#1c2026;font-family:'Liberation Mono', monospace;letter-spacing:-0.100px;left:121.36px;width:300px;text-align:center;-webkit-text-stroke:0.08px currentColor;"><span id="t41" style="display:inline-block;">A3s</span></div>
<div class="t" style="top:67.27px;line-height:9.36px;font-size:7.2px;color:#1c2026;font-family:'Liberation Mono', monospace;letter-spacing:-0.100px;left:141.72px;width:300px;text-align:center;-webkit-text-stroke:0.08px currentColor;"><span id="t42" style="display:inline-block;">A2s</span></div>
<div class="t" style="top:85.90px;line-height:9.36px;font-size:7.2px;color:#1c2026;font-family:'Liberation Mono', monospace;letter-spacing:-0.100px;left:-102.61px;width:300px;text-align:center;-webkit-text-stroke:0.08px currentColor;"><span id="t43" style="display:inline-block;">AKo</span></div>
<div class="t" style="top:85.90px;line-height:9.36px;font-size:7.2px;color:#1c2026;font-family:'Liberation Mono', monospace;letter-spacing:-0.100px;left:-21.17px;width:300px;text-align:center;-webkit-text-stroke:0.08px currentColor;"><span id="t44" style="display:inline-block;">KTs</span></div>
<div class="t" style="top:104.53px;line-height:9.36px;font-size:7.2px;color:#1c2026;font-family:'Liberation Mono', monospace;letter-spacing:-0.100px;left:-102.61px;width:300px;text-align:center;-webkit-text-stroke:0.08px currentColor;"><span id="t45" style="display:inline-block;">AQo</span></div>
<div class="t" style="top:104.53px;line-height:9.36px;font-size:7.2px;color:#1c2026;font-family:'Liberation Mono', monospace;letter-spacing:-0.100px;left:-41.53px;width:300px;text-align:center;-webkit-text-stroke:0.08px currentColor;"><span id="t46" style="display:inline-block;">QJs</span></div>
<div class="t" style="top:104.53px;line-height:9.36px;font-size:7.2px;color:#1c2026;font-family:'Liberation Mono', monospace;letter-spacing:-0.100px;left:-21.17px;width:300px;text-align:center;-webkit-text-stroke:0.08px currentColor;"><span id="t47" style="display:inline-block;">QTs</span></div>
<div class="t" style="top:104.53px;line-height:9.36px;font-size:7.2px;color:#1c2026;font-family:'Liberation Mono', monospace;letter-spacing:-0.100px;left:-0.81px;width:300px;text-align:center;-webkit-text-stroke:0.08px currentColor;"><span id="t48" style="display:inline-block;">Q9s</span></div>
<div class="t" style="top:123.16px;line-height:9.36px;font-size:7.2px;color:#1c2026;font-family:'Liberation Mono', monospace;letter-spacing:-0.100px;left:-0.81px;width:300px;text-align:center;-webkit-text-stroke:0.08px currentColor;"><span id="t49" style="display:inline-block;">J9s</span></div>
<div class="t" style="top:123.16px;line-height:9.36px;font-size:7.2px;color:#1c2026;font-family:'Liberation Mono', monospace;letter-spacing:-0.100px;left:19.56px;width:300px;text-align:center;-webkit-text-stroke:0.08px currentColor;"><span id="t50" style="display:inline-block;">J8s</span></div>
<div class="t" style="top:141.80px;line-height:9.36px;font-size:7.2px;color:#1c2026;font-family:'Liberation Mono', monospace;letter-spacing:-0.100px;left:-0.81px;width:300px;text-align:center;-webkit-text-stroke:0.08px currentColor;"><span id="t51" style="display:inline-block;">T9s</span></div>
<div class="t" style="top:160.43px;line-height:9.36px;font-size:7.2px;color:#1c2026;font-family:'Liberation Mono', monospace;letter-spacing:-0.100px;left:19.56px;width:300px;text-align:center;-webkit-text-stroke:0.08px currentColor;"><span id="t52" style="display:inline-block;">98s</span></div>
<div class="t" style="top:160.43px;line-height:9.36px;font-size:7.2px;color:#1c2026;font-family:'Liberation Mono', monospace;letter-spacing:-0.100px;left:39.92px;width:300px;text-align:center;-webkit-text-stroke:0.08px currentColor;"><span id="t53" style="display:inline-block;">97s</span></div>
<div class="t" style="top:179.06px;line-height:9.36px;font-size:7.2px;color:#1c2026;font-family:'Liberation Mono', monospace;letter-spacing:-0.100px;left:39.92px;width:300px;text-align:center;-webkit-text-stroke:0.08px currentColor;"><span id="t54" style="display:inline-block;">87s</span></div>
<div class="t" style="top:179.06px;line-height:9.36px;font-size:7.2px;color:#1c2026;font-family:'Liberation Mono', monospace;letter-spacing:-0.100px;left:60.28px;width:300px;text-align:center;-webkit-text-stroke:0.08px currentColor;"><span id="t55" style="display:inline-block;">86s</span></div>
<div class="t" style="top:216.33px;line-height:9.36px;font-size:7.2px;color:#1c2026;font-family:'Liberation Mono', monospace;letter-spacing:-0.100px;left:80.64px;width:300px;text-align:center;-webkit-text-stroke:0.08px currentColor;"><span id="t56" style="display:inline-block;">65s</span></div>
<div class="t" style="top:44.10px;line-height:9.1px;font-size:7.0px;color:#1c1c1c;left:180.75px;width:300px;text-align:center;"><span id="t57" style="display:inline-block;transform:scaleX(0.839);transform-origin:50% 50%;">Check All</span></div>
<div class="t" style="top:44.10px;line-height:9.1px;font-size:7.0px;color:#1c1c1c;left:221.45px;width:300px;text-align:center;"><span id="t58" style="display:inline-block;transform:scaleX(0.891);transform-origin:50% 50%;">Empty All</span></div>
<span class="t" id="t59" style="top:61.35px;line-height:9.1px;font-size:7.0px;color:#20200c;left:324.70px;transform:scaleX(0.897);transform-origin:0 50%;">two pair</span>
<span class="t" id="t60" style="top:61.35px;line-height:9.1px;font-size:7.0px;color:#20200c;right:311.40px;transform:scaleX(0.957);transform-origin:100% 50%;">2.83%</span>
<span class="t" id="t61" style="top:72.98px;line-height:9.1px;font-size:7.0px;color:#20200c;left:324.70px;transform:scaleX(0.909);transform-origin:0 50%;">overpair</span>
<span class="t" id="t62" style="top:72.98px;line-height:9.1px;font-size:7.0px;color:#20200c;right:311.40px;transform:scaleX(0.957);transform-origin:100% 50%;">9.96%</span>
<span class="t" id="t63" style="top:84.61px;line-height:9.1px;font-size:7.0px;color:#20200c;left:324.70px;transform:scaleX(0.899);transform-origin:0 50%;">top pair</span>
<span class="t" id="t64" style="top:84.61px;line-height:9.1px;font-size:7.0px;color:#20200c;right:311.40px;transform:scaleX(0.947);transform-origin:100% 50%;">10.22%</span>
<span class="t" id="t65" style="top:96.24px;line-height:9.1px;font-size:7.0px;color:#20200c;left:324.70px;transform:scaleX(0.886);transform-origin:0 50%;">2-nd pair</span>
<span class="t" id="t66" style="top:96.24px;line-height:9.1px;font-size:7.0px;color:#20200c;right:311.40px;transform:scaleX(0.957);transform-origin:100% 50%;">8.76%</span>
<span class="t" id="t67" style="top:107.87px;line-height:9.1px;font-size:7.0px;color:#20200c;left:324.70px;transform:scaleX(0.901);transform-origin:0 50%;">3-rd pair</span>
<span class="t" id="t68" style="top:107.87px;line-height:9.1px;font-size:7.0px;color:#20200c;right:311.40px;transform:scaleX(0.957);transform-origin:100% 50%;">4.64%</span>
<span class="t" id="t69" style="top:119.50px;line-height:9.1px;font-size:7.0px;color:#20200c;left:324.70px;transform:scaleX(0.868);transform-origin:0 50%;">weak pair</span>
<span class="t" id="t70" style="top:119.50px;line-height:9.1px;font-size:7.0px;color:#20200c;right:311.40px;transform:scaleX(0.957);transform-origin:100% 50%;">2.44%</span>
<span class="t" id="t71" style="top:131.13px;line-height:9.1px;font-size:7.0px;color:#20200c;left:324.70px;transform:scaleX(0.890);transform-origin:0 50%;">A-high</span>
<span class="t" id="t72" style="top:131.13px;line-height:9.1px;font-size:7.0px;color:#20200c;right:311.40px;transform:scaleX(0.957);transform-origin:100% 50%;">9.13%</span>
<span class="t" id="t73" style="top:142.76px;line-height:9.1px;font-size:7.0px;color:#20200c;left:324.70px;transform:scaleX(0.914);transform-origin:0 50%;">nothing</span>
<span class="t" id="t74" style="top:142.76px;line-height:9.1px;font-size:7.0px;color:#20200c;right:311.40px;transform:scaleX(0.957);transform-origin:100% 50%;">0.00%</span>
<span class="t" id="t75" style="top:166.05px;line-height:9.1px;font-size:7.0px;color:#20200c;left:324.70px;transform:scaleX(0.903);transform-origin:0 50%;">no draw</span>
<span class="t" id="t76" style="top:166.05px;line-height:9.1px;font-size:7.0px;color:#20200c;right:311.40px;transform:scaleX(0.947);transform-origin:100% 50%;">47.98%</span>
<span class="t" id="t77" style="top:43.95px;line-height:9.1px;font-size:7.0px;color:#1c1c1c;left:399.80px;transform:scaleX(0.903);transform-origin:0 50%;">Pot</span>
<span class="t" id="t78" style="top:43.95px;line-height:9.1px;font-size:7.0px;color:#1c1c1c;right:235.60px;transform:scaleX(0.910);transform-origin:100% 50%;">200.50</span>
<span class="t" id="t79" style="top:61.25px;line-height:9.1px;font-size:7.0px;color:#1c1c1c;left:399.80px;transform:scaleX(0.871);transform-origin:0 50%;">Stacks:</span>
<span class="t" id="t80" style="top:78.65px;line-height:9.1px;font-size:7.0px;color:#1c1c1c;left:399.80px;transform:scaleX(0.885);transform-origin:0 50%;">Player1</span>
<span class="t" id="t81" style="top:78.65px;line-height:9.1px;font-size:7.0px;color:#1c1c1c;right:235.60px;transform:scaleX(0.939);transform-origin:100% 50%;">0.00</span>
<span class="t" id="t82" style="top:96.15px;line-height:9.1px;font-size:7.0px;color:#1c1c1c;left:399.80px;transform:scaleX(0.885);transform-origin:0 50%;">Player2</span>
<span class="t" id="t83" style="top:96.15px;line-height:9.1px;font-size:7.0px;color:#1c1c1c;right:235.60px;transform:scaleX(0.939);transform-origin:100% 50%;">0.00</span>
<span class="t" id="t84" style="top:113.65px;line-height:9.1px;font-size:7.0px;color:#1c1c1c;left:399.80px;transform:scaleX(0.831);transform-origin:0 50%;">Nash EVs:</span>
<span class="t" id="t85" style="top:131.15px;line-height:9.1px;font-size:7.0px;color:#1c1c1c;left:399.80px;transform:scaleX(0.885);transform-origin:0 50%;">Player1</span>
<span class="t" id="t86" style="top:131.15px;line-height:9.1px;font-size:7.0px;color:#1c1c1c;right:235.60px;transform:scaleX(0.910);transform-origin:100% 50%;">15.461</span>
<span class="t" id="t87" style="top:148.55px;line-height:9.1px;font-size:7.0px;color:#1c1c1c;left:399.80px;transform:scaleX(0.885);transform-origin:0 50%;">Player2</span>
<span class="t" id="t88" style="top:148.55px;line-height:9.1px;font-size:7.0px;color:#1c1c1c;right:235.60px;transform:scaleX(0.913);transform-origin:100% 50%;">5.039</span>
<span class="t" id="t89" style="top:165.95px;line-height:9.1px;font-size:7.0px;color:#1c1c1c;left:403.00px;transform:scaleX(0.900);transform-origin:0 50%;">Absolute weight</span>
<span class="t" id="t90" style="top:183.45px;line-height:9.1px;font-size:7.0px;color:#1c1c1c;left:403.00px;transform:scaleX(0.900);transform-origin:0 50%;">Strategy Show</span>
<span class="t" id="t91" style="top:202.25px;line-height:9.1px;font-size:7.0px;color:#1c1c1c;left:417.60px;transform:scaleX(0.888);transform-origin:0 50%;">Call 51.80</span>
<span class="t" id="t92" style="top:219.75px;line-height:9.1px;font-size:7.0px;color:#1c1c1c;left:417.60px;transform:scaleX(0.844);transform-origin:0 50%;">Fold</span>
<div class="t" style="top:45.12px;line-height:9.36px;font-size:7.2px;color:#1a1a1a;left:361.70px;width:300px;text-align:center;"><span id="t93" style="display:inline-block;transform:scaleX(0.962);transform-origin:50% 50%;">Card</span></div>
<div class="t" style="top:45.12px;line-height:9.36px;font-size:7.2px;color:#1a1a1a;left:412.40px;width:300px;text-align:center;"><span id="t94" style="display:inline-block;transform:scaleX(0.938);transform-origin:50% 50%;">Abs.%</span></div>
<div class="t" style="top:45.12px;line-height:9.36px;font-size:7.2px;color:#1a1a1a;left:444.40px;width:300px;text-align:center;"><span id="t95" style="display:inline-block;transform:scaleX(0.934);transform-origin:50% 50%;">Played%</span></div>
<div class="t" style="top:45.12px;line-height:9.36px;font-size:7.2px;color:#1a1a1a;left:476.40px;width:300px;text-align:center;"><span id="t96" style="display:inline-block;">Equity</span></div>
<div class="t" style="top:45.12px;line-height:9.36px;font-size:7.2px;color:#1a1a1a;left:508.45px;width:300px;text-align:center;"><span id="t97" style="display:inline-block;transform:scaleX(0.886);transform-origin:50% 50%;">EV</span></div>
<span class="t" id="t98" style="top:59.03px;line-height:9.1px;font-size:7.0px;color:#0a8a1a;font-family:'Liberation Mono', monospace;left:483.00px;transform:scaleX(0.965);transform-origin:0 50%;-webkit-text-stroke:0;"><span style="font-family:'DejaVu Sans Mono',monospace;font-size:7.6px">♣</span>A <span style="font-family:'DejaVu Sans Mono',monospace;font-size:7.6px">♣</span>4</span>
<span class="t" id="t99" style="top:58.00px;line-height:9.36px;font-size:7.2px;color:#ffffff;right:124.20px;transform:scaleX(0.889);transform-origin:100% 50%;">51.75</span>
<span class="t" id="t100" style="top:58.00px;line-height:9.36px;font-size:7.2px;color:#ffffff;right:92.20px;transform:scaleX(0.887);transform-origin:100% 50%;">100.00</span>
<span class="t" id="t101" style="top:58.00px;line-height:9.36px;font-size:7.2px;color:#ffffff;right:60.20px;transform:scaleX(0.889);transform-origin:100% 50%;">28.78</span>
<span class="t" id="t102" style="top:58.00px;line-height:9.36px;font-size:7.2px;color:#ffffff;right:27.50px;transform:scaleX(0.901);transform-origin:100% 50%;">+5.788</span>
<div class="t" style="top:208.32px;line-height:9.36px;font-size:7.2px;color:#1a1a1a;left:361.70px;width:300px;text-align:center;"><span id="t103" style="display:inline-block;transform:scaleX(1.026);transform-origin:50% 50%;">Action</span></div>
<div class="t" style="top:208.32px;line-height:9.36px;font-size:7.2px;color:#1a1a1a;left:412.40px;width:300px;text-align:center;"><span id="t104" style="display:inline-block;transform:scaleX(0.938);transform-origin:50% 50%;">Abs.%</span></div>
<div class="t" style="top:208.32px;line-height:9.36px;font-size:7.2px;color:#1a1a1a;left:444.40px;width:300px;text-align:center;"><span id="t105" style="display:inline-block;transform:scaleX(0.934);transform-origin:50% 50%;">Played%</span></div>
<div class="t" style="top:208.32px;line-height:9.36px;font-size:7.2px;color:#1a1a1a;left:476.40px;width:300px;text-align:center;"><span id="t106" style="display:inline-block;">Equity</span></div>
<div class="t" style="top:208.32px;line-height:9.36px;font-size:7.2px;color:#1a1a1a;left:508.45px;width:300px;text-align:center;"><span id="t107" style="display:inline-block;transform:scaleX(0.886);transform-origin:50% 50%;">EV</span></div>
<span class="t" id="t108" style="top:220.50px;line-height:9.36px;font-size:7.2px;color:#1a1a1a;left:478.60px;transform:scaleX(0.894);transform-origin:0 50%;">Player1 Call 51.80</span>
<span class="t" id="t109" style="top:220.50px;line-height:9.36px;font-size:7.2px;color:#1a1a1a;right:124.20px;transform:scaleX(0.889);transform-origin:100% 50%;">51.75</span>
<span class="t" id="t110" style="top:220.50px;line-height:9.36px;font-size:7.2px;color:#1a1a1a;right:92.20px;transform:scaleX(0.887);transform-origin:100% 50%;">100.00</span>
<span class="t" id="t111" style="top:220.50px;line-height:9.36px;font-size:7.2px;color:#1a1a1a;right:60.20px;transform:scaleX(0.889);transform-origin:100% 50%;">28.78</span>
<span class="t" id="t112" style="top:220.50px;line-height:9.36px;font-size:7.2px;color:#1f8a2c;right:27.50px;transform:scaleX(0.879);transform-origin:100% 50%;">+5.788</span>
<span class="t" id="t113" style="top:232.25px;line-height:9.36px;font-size:7.2px;color:#1a1a1a;left:478.60px;transform:scaleX(0.904);transform-origin:0 50%;">Player1 Fold</span>
<span class="t" id="t114" style="top:232.25px;line-height:9.36px;font-size:7.2px;color:#1a1a1a;right:124.20px;transform:scaleX(0.889);transform-origin:100% 50%;">51.75</span>
<span class="t" id="t115" style="top:232.25px;line-height:9.36px;font-size:7.2px;color:#1a1a1a;right:92.20px;transform:scaleX(0.893);transform-origin:100% 50%;">0.00</span>
<span class="t" id="t116" style="top:232.25px;line-height:9.36px;font-size:7.2px;color:#1a1a1a;right:60.20px;transform:scaleX(0.893);transform-origin:100% 50%;">0.00</span>
<span class="t" id="t117" style="top:232.25px;line-height:9.36px;font-size:7.2px;color:#1a1a1a;right:27.50px;transform:scaleX(0.889);transform-origin:100% 50%;">0.000</span>
<div class="t" style="top:320.75px;line-height:9.49px;font-size:7.3px;color:#dcdcff;font-family:'Liberation Serif', serif;left:-129.70px;width:300px;text-align:center;-webkit-text-stroke:0;"><span id="t118" style="display:inline-block;">K</span></div>
<div class="t" style="top:328.97px;line-height:18.85px;font-size:14.5px;color:#ece6e6;font-family:'Liberation Serif', serif;left:-121.50px;width:300px;text-align:center;-webkit-text-stroke:0;"><span id="t119" style="display:inline-block;">K</span></div>
<div class="t" style="top:320.75px;line-height:9.49px;font-size:7.3px;color:#9cf09c;font-family:'Liberation Serif', serif;left:-100.70px;width:300px;text-align:center;-webkit-text-stroke:0;"><span id="t120" style="display:inline-block;">T</span></div>
<div class="t" style="top:328.97px;line-height:18.85px;font-size:14.5px;color:#ece6e6;font-family:'Liberation Serif', serif;left:-92.50px;width:300px;text-align:center;-webkit-text-stroke:0;"><span id="t121" style="display:inline-block;">T</span></div>
<div class="t" style="top:320.75px;line-height:9.49px;font-size:7.3px;color:#ffb0b0;font-family:'Liberation Serif', serif;left:-71.70px;width:300px;text-align:center;-webkit-text-stroke:0;"><span id="t122" style="display:inline-block;">6</span></div>
<div class="t" style="top:328.97px;line-height:18.85px;font-size:14.5px;color:#ece6e6;font-family:'Liberation Serif', serif;left:-63.50px;width:300px;text-align:center;-webkit-text-stroke:0;"><span id="t123" style="display:inline-block;">6</span></div>
<div class="t" style="top:320.75px;line-height:9.49px;font-size:7.3px;color:#9cf09c;font-family:'Liberation Serif', serif;left:-42.70px;width:300px;text-align:center;-webkit-text-stroke:0;"><span id="t124" style="display:inline-block;">2</span></div>
<div class="t" style="top:328.97px;line-height:18.85px;font-size:14.5px;color:#ece6e6;font-family:'Liberation Serif', serif;left:-34.50px;width:300px;text-align:center;-webkit-text-stroke:0;"><span id="t125" style="display:inline-block;">2</span></div>
<div class="t" style="top:320.75px;line-height:9.49px;font-size:7.3px;color:#ff8c8c;font-family:'Liberation Serif', serif;left:-13.70px;width:300px;text-align:center;-webkit-text-stroke:0;"><span id="t126" style="display:inline-block;">3</span></div>
<div class="t" style="top:328.97px;line-height:18.85px;font-size:14.5px;color:#ece6e6;font-family:'Liberation Serif', serif;left:-5.50px;width:300px;text-align:center;-webkit-text-stroke:0;"><span id="t127" style="display:inline-block;">3</span></div>
<span class="t" id="t128" style="top:322.05px;line-height:9.1px;font-size:7.0px;color:#1c1c1c;left:161.80px;transform:scaleX(0.905);transform-origin:0 50%;">Eff. Stack</span>
<span class="t" id="t129" style="top:339.55px;line-height:9.1px;font-size:7.0px;color:#1c1c1c;left:161.80px;transform:scaleX(0.953);transform-origin:0 50%;">Street</span>
<div class="t" style="top:322.12px;line-height:9.36px;font-size:7.2px;color:#8c8c8c;left:60.00px;width:300px;text-align:center;"><span id="t130" style="display:inline-block;transform:scaleX(0.917);transform-origin:50% 50%;">90.00</span></div>
<span class="t" id="t131" style="top:322.05px;line-height:9.1px;font-size:7.0px;color:#1c1c1c;left:237.50px;transform:scaleX(0.858);transform-origin:0 50%;">Main Pot</span>
<div class="t" style="top:322.12px;line-height:9.36px;font-size:7.2px;color:#8c8c8c;left:129.75px;width:300px;text-align:center;"><span id="t132" style="display:inline-block;transform:scaleX(0.917);transform-origin:50% 50%;">20.50</span></div>
<span class="t" id="t133" style="top:339.65px;line-height:9.1px;font-size:7.0px;color:#8c8c8c;left:207.70px;transform:scaleX(0.866);transform-origin:0 50%;">Flop</span>
<span class="t" id="t134" style="top:339.65px;line-height:9.1px;font-size:7.0px;color:#8c8c8c;left:245.50px;transform:scaleX(0.849);transform-origin:0 50%;">Turn</span>
<span class="t" id="t135" style="top:339.65px;line-height:9.1px;font-size:7.0px;color:#8c8c8c;left:283.30px;transform:scaleX(0.875);transform-origin:0 50%;">River</span>
<span class="t" id="t136" style="top:322.05px;line-height:9.1px;font-size:7.0px;color:#1c1c1c;left:312.90px;transform:scaleX(0.901);transform-origin:0 50%;">Player 1 bet sizing:</span>
<span class="t" id="t137" style="top:339.55px;line-height:9.1px;font-size:7.0px;color:#1c1c1c;left:312.90px;transform:scaleX(0.886);transform-origin:0 50%;">Player 2 bet sizing</span>
<div class="t" style="top:322.15px;line-height:9.1px;font-size:7.0px;color:#1c1c1c;left:258.25px;width:300px;text-align:center;"><span id="t138" style="display:inline-block;transform:scaleX(0.885);transform-origin:50% 50%;">Player1</span></div>
<div class="t" style="top:339.45px;line-height:9.1px;font-size:7.0px;color:#1c1c1c;left:258.25px;width:300px;text-align:center;"><span id="t139" style="display:inline-block;transform:scaleX(0.885);transform-origin:50% 50%;">Player2</span></div>
<div class="t" style="top:322.15px;line-height:9.1px;font-size:7.0px;color:#1c1c1c;left:337.65px;width:300px;text-align:center;"><span id="t140" style="display:inline-block;transform:scaleX(0.861);transform-origin:50% 50%;">Save Tree</span></div>
<div class="t" style="top:339.45px;line-height:9.1px;font-size:7.0px;color:#1c1c1c;left:337.65px;width:300px;text-align:center;"><span id="t141" style="display:inline-block;transform:scaleX(0.893);transform-origin:50% 50%;">Clear Situation</span></div>
<div class="t" style="top:322.15px;line-height:9.1px;font-size:7.0px;color:#1c1c1c;left:409.45px;width:300px;text-align:center;"><span id="t142" style="display:inline-block;transform:scaleX(0.857);transform-origin:50% 50%;">Merge Same Tries</span></div>
<div class="t" style="top:339.45px;line-height:9.1px;font-size:7.0px;color:#1c1c1c;left:413.40px;width:300px;text-align:center;"><span id="t143" style="display:inline-block;transform:scaleX(0.891);transform-origin:50% 50%;">Generate Boards</span></div>
<span class="t" id="t144" style="top:322.15px;line-height:9.1px;font-size:7.0px;color:#8c8c8c;left:606.50px;transform:scaleX(0.826);transform-origin:0 50%;">Cash</span>
<div class="t" style="top:322.15px;line-height:9.1px;font-size:7.0px;color:#8c8c8c;left:514.95px;width:300px;text-align:center;"><span id="t145" style="display:inline-block;transform:scaleX(0.833);transform-origin:50% 50%;">Stacks</span></div>
<span class="t" id="t146" style="top:339.55px;line-height:9.1px;font-size:7.0px;color:#1c1c1c;left:604.00px;transform:scaleX(0.852);transform-origin:0 50%;">Who is OOP:</span>
<span class="t" id="t147" style="top:339.65px;line-height:9.1px;font-size:7.0px;color:#8c8c8c;left:647.10px;transform:scaleX(0.876);transform-origin:0 50%;">Player 1</span>
<span class="t" id="t148" style="top:368.85px;line-height:9.1px;font-size:7.0px;color:#1c1c1c;left:16.90px;transform:scaleX(0.885);transform-origin:0 50%;">Range Player1</span>
<span class="t" id="t149" style="top:385.95px;line-height:9.1px;font-size:7.0px;color:#1c1c1c;left:16.90px;transform:scaleX(0.885);transform-origin:0 50%;">Range Player2</span>
<div class="t" style="top:368.90px;line-height:9.1px;font-size:7.0px;color:#1c1c1c;left:-40.75px;width:300px;text-align:center;"><span id="t150" style="display:inline-block;transform:scaleX(0.900);transform-origin:50% 50%;">12.52%</span></div>
<div class="t" style="top:386.00px;line-height:9.1px;font-size:7.0px;color:#1c1c1c;left:-40.75px;width:300px;text-align:center;"><span id="t151" style="display:inline-block;transform:scaleX(0.900);transform-origin:50% 50%;">19.08%</span></div>
<div class="t" style="top:368.90px;line-height:9.1px;font-size:7.0px;color:#1c1c1c;left:38.70px;width:300px;text-align:center;"><span id="t152" style="display:inline-block;transform:scaleX(0.883);transform-origin:50% 50%;">Calculate Flop</span></div>
<div class="t" style="top:386.00px;line-height:9.1px;font-size:7.0px;color:#1c1c1c;left:13.70px;width:300px;text-align:center;"><span id="t153" style="display:inline-block;transform:scaleX(0.895);transform-origin:50% 50%;">Add Job</span></div>
<div class="t" style="top:386.00px;line-height:9.1px;font-size:7.0px;color:#1c1c1c;left:60.55px;width:300px;text-align:center;"><span id="t154" style="display:inline-block;transform:scaleX(0.896);transform-origin:50% 50%;">Round</span></div>
<span class="t" id="t155" style="top:405.25px;line-height:9.49px;font-size:7.3px;color:#161616;left:20.20px;transform:scaleX(0.971);transform-origin:0 50%;">Flop Actions</span>
<span class="t" id="t156" style="top:416.96px;line-height:9.88px;font-size:7.6px;color:#161616;left:31.10px;transform:scaleX(0.870);transform-origin:0 50%;">Flop Kd Tc 6h - Nash Dist. 0.007</span>
<span class="t" id="t157" style="top:426.81px;line-height:9.88px;font-size:7.6px;color:#161616;left:42.60px;transform:scaleX(0.866);transform-origin:0 50%;">Player1 Check - 23.11%</span>
<span class="t" id="t158" style="top:436.66px;line-height:9.88px;font-size:7.6px;color:#161616;left:42.60px;transform:scaleX(0.855);transform-origin:0 50%;">Player1 Bet 11.30 - 76.89%</span>
<span class="t" id="t159" style="top:446.51px;line-height:9.88px;font-size:7.6px;color:#161616;left:54.10px;transform:scaleX(0.864);transform-origin:0 50%;">Player2 Call 11.30 - 66.92%</span>
<span class="t" id="t160" style="top:456.36px;line-height:9.88px;font-size:7.6px;color:#161616;left:54.10px;transform:scaleX(0.870);transform-origin:0 50%;">Player2 Fold - 33.02%</span>
<span class="t" id="t161" style="top:466.21px;line-height:9.88px;font-size:7.6px;color:#161616;left:54.10px;transform:scaleX(0.855);transform-origin:0 50%;">Player2 Raise to 36.00 - 0.05%</span>
<span class="t" id="t162" style="top:368.85px;line-height:9.1px;font-size:7.0px;color:#1c1c1c;left:243.00px;transform:scaleX(0.885);transform-origin:0 50%;">Range Player1</span>
<span class="t" id="t163" style="top:385.95px;line-height:9.1px;font-size:7.0px;color:#1c1c1c;left:243.00px;transform:scaleX(0.885);transform-origin:0 50%;">Range Player2</span>
<div class="t" style="top:368.90px;line-height:9.1px;font-size:7.0px;color:#1c1c1c;left:185.35px;width:300px;text-align:center;"><span id="t164" style="display:inline-block;transform:scaleX(0.900);transform-origin:50% 50%;">9.41%</span></div>
<div class="t" style="top:386.00px;line-height:9.1px;font-size:7.0px;color:#1c1c1c;left:185.35px;width:300px;text-align:center;"><span id="t165" style="display:inline-block;transform:scaleX(0.900);transform-origin:50% 50%;">12.55%</span></div>
<div class="t" style="top:368.90px;line-height:9.1px;font-size:7.0px;color:#1c1c1c;left:264.80px;width:300px;text-align:center;"><span id="t166" style="display:inline-block;transform:scaleX(0.886);transform-origin:50% 50%;">Calculate Turn</span></div>
<div class="t" style="top:386.00px;line-height:9.1px;font-size:7.0px;color:#8c8c8c;left:236.20px;width:300px;text-align:center;"><span id="t167" style="display:inline-block;transform:scaleX(0.863);transform-origin:50% 50%;">Runouts</span></div>
<div class="t" style="top:386.00px;line-height:9.1px;font-size:7.0px;color:#1c1c1c;left:286.65px;width:300px;text-align:center;"><span id="t168" style="display:inline-block;transform:scaleX(0.896);transform-origin:50% 50%;">Round</span></div>
<span class="t" id="t169" style="top:405.25px;line-height:9.49px;font-size:7.3px;color:#161616;left:246.30px;transform:scaleX(0.958);transform-origin:0 50%;">Turn Actions</span>
<span class="t" id="t170" style="top:416.96px;line-height:9.88px;font-size:7.6px;color:#161616;left:258.00px;transform:scaleX(0.872);transform-origin:0 50%;">Turn Kd Tc 6h 2c - Nash Dist. 0.004</span>
<span class="t" id="t171" style="top:426.81px;line-height:9.88px;font-size:7.6px;color:#161616;left:269.50px;transform:scaleX(0.860);transform-origin:0 50%;">Player1 Check - 51.01%</span>
<span class="t" id="t172" style="top:436.66px;line-height:9.88px;font-size:7.6px;color:#161616;left:269.50px;transform:scaleX(0.850);transform-origin:0 50%;">Player1 Bet 26.90 - 48.99%</span>
<span class="t" id="t173" style="top:446.51px;line-height:9.88px;font-size:7.6px;color:#161616;left:281.00px;transform:scaleX(0.859);transform-origin:0 50%;">Player2 Call 26.90 - 47.65%</span>
<span class="t" id="t174" style="top:456.36px;line-height:9.88px;font-size:7.6px;color:#161616;left:281.00px;transform:scaleX(0.870);transform-origin:0 50%;">Player2 Fold - 35.53%</span>
<span class="t" id="t175" style="top:466.21px;line-height:9.88px;font-size:7.6px;color:#161616;left:281.00px;transform:scaleX(0.851);transform-origin:0 50%;">Player2 Raise to 78.70 - 16.82%</span>
<span class="t" id="t176" style="top:368.85px;line-height:9.1px;font-size:7.0px;color:#1c1c1c;left:470.10px;transform:scaleX(0.885);transform-origin:0 50%;">Range Player1</span>
<span class="t" id="t177" style="top:385.95px;line-height:9.1px;font-size:7.0px;color:#1c1c1c;left:470.10px;transform:scaleX(0.885);transform-origin:0 50%;">Range Player2</span>
<div class="t" style="top:368.90px;line-height:9.1px;font-size:7.0px;color:#1c1c1c;left:412.45px;width:300px;text-align:center;"><span id="t178" style="display:inline-block;transform:scaleX(0.900);transform-origin:50% 50%;">4.79%</span></div>
<div class="t" style="top:386.00px;line-height:9.1px;font-size:7.0px;color:#1c1c1c;left:412.45px;width:300px;text-align:center;"><span id="t179" style="display:inline-block;transform:scaleX(0.900);transform-origin:50% 50%;">6.23%</span></div>
<div class="t" style="top:368.90px;line-height:9.1px;font-size:7.0px;color:#1c1c1c;left:491.90px;width:300px;text-align:center;"><span id="t180" style="display:inline-block;transform:scaleX(0.874);transform-origin:50% 50%;">Calculate River</span></div>
<div class="t" style="top:386.00px;line-height:9.1px;font-size:7.0px;color:#1c1c1c;left:463.30px;width:300px;text-align:center;"><span id="t181" style="display:inline-block;transform:scaleX(0.863);transform-origin:50% 50%;">Runouts</span></div>
<div class="t" style="top:386.00px;line-height:9.1px;font-size:7.0px;color:#1c1c1c;left:513.75px;width:300px;text-align:center;"><span id="t182" style="display:inline-block;transform:scaleX(0.896);transform-origin:50% 50%;">Round</span></div>
<span class="t" id="t183" style="top:405.25px;line-height:9.49px;font-size:7.3px;color:#161616;left:473.40px;transform:scaleX(0.963);transform-origin:0 50%;">River Actions</span>
<span class="t" id="t184" style="top:416.96px;line-height:9.88px;font-size:7.6px;color:#161616;left:484.80px;transform:scaleX(0.863);transform-origin:0 50%;">River Kd Tc 6h 2c 3h - Nash Dist. 0.013 (10%)</span>
<span class="t" id="t185" style="top:426.81px;line-height:9.88px;font-size:7.6px;color:#161616;left:496.30px;transform:scaleX(0.865);transform-origin:0 50%;">Player1 Check - 37.10%</span>
<span class="t" id="t186" style="top:436.66px;line-height:9.88px;font-size:7.6px;color:#161616;left:507.80px;transform:scaleX(0.865);transform-origin:0 50%;">Player2 Check - 37.77%</span>
<span class="t" id="t187" style="top:446.51px;line-height:9.88px;font-size:7.6px;color:#161616;left:507.80px;transform:scaleX(0.850);transform-origin:0 50%;">Player2 Bet 51.80 - 62.23%</span>
<span class="t" id="t188" style="top:456.36px;line-height:9.88px;font-size:7.6px;color:#161616;left:519.30px;transform:scaleX(0.851);transform-origin:0 50%;">Player1 Call 51.80 - 47.98%</span>
<span class="t" id="t189" style="top:466.21px;line-height:9.88px;font-size:7.6px;color:#161616;left:519.30px;transform:scaleX(0.861);transform-origin:0 50%;">Player1 Fold - 52.02%</span>
<span class="t" id="t190" style="top:476.06px;line-height:9.88px;font-size:7.6px;color:#161616;left:496.30px;transform:scaleX(0.852);transform-origin:0 50%;">Player1 Bet 51.80 - 62.90%</span>
</body></html>
